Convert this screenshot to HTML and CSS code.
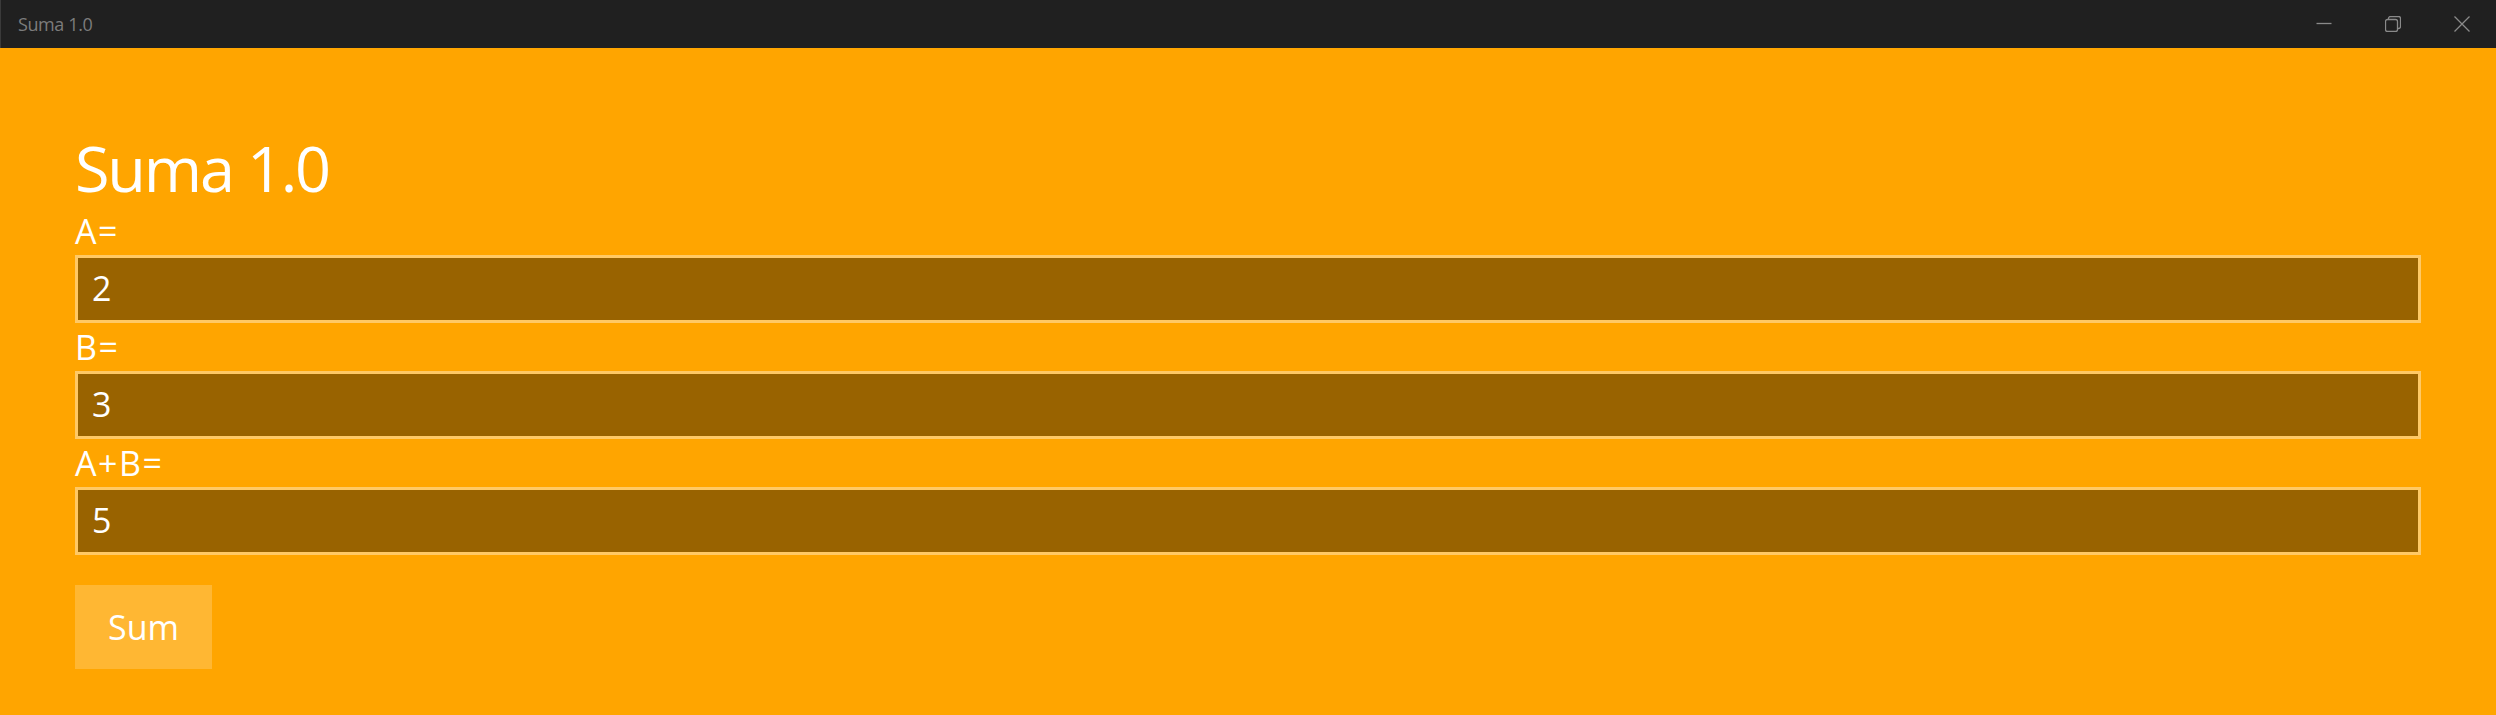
FILE: index.html
```html
<!DOCTYPE html>
<html lang="es">
<head>
<meta charset="utf-8">
<title>Suma 1.0</title>
<link rel="stylesheet" href="styles.css">
</head>
<body>
<div class="window">
  <header class="titlebar">
    <span class="app-title">Suma 1.0</span>
    <div class="controls">
      <div class="ctl">
        <svg width="16" height="16" viewBox="0 0 16 16"><path d="M0.5 7.5H15.5" /></svg>
      </div>
      <div class="ctl">
        <svg width="16" height="16" viewBox="0 0 16 16">
          <rect x="0.5" y="3.5" width="12" height="12" rx="2" />
          <path d="M3.5 3.5V2.5A2 2 0 0 1 5.5 0.5H13.5A2 2 0 0 1 15.5 2.5V10.5A2 2 0 0 1 13.5 12.5H12.5" />
        </svg>
      </div>
      <div class="ctl">
        <svg width="16" height="16" viewBox="0 0 16 16"><path d="M0.5 0.5L15.5 15.5M15.5 0.5L0.5 15.5" /></svg>
      </div>
    </div>
  </header>
  <main class="content">
    <h1 class="heading">Suma 1.0</h1>
    <div class="field">
      <label class="label" for="a">A=</label>
      <input class="box" id="a" type="text" value="2">
    </div>
    <div class="field">
      <label class="label" for="b">B=</label>
      <input class="box" id="b" type="text" value="3">
    </div>
    <div class="field">
      <label class="label" for="r">A+B=</label>
      <input class="box" id="r" type="text" value="5">
    </div>
    <button class="sum-btn" type="button">Sum</button>
  </main>
</div>
</body>
</html>
```

FILE: styles.css
```css
html, body {
  margin: 0;
  padding: 0;
}

body {
  width: 2496px;
  height: 715px;
  overflow: hidden;
  background: #ffa500;
  font-family: "Open Sans", "Noto Sans", sans-serif;
}

.window {
  display: flex;
  flex-direction: column;
  height: 715px;
}

.titlebar {
  height: 48px;
  flex: 0 0 48px;
  background: #202020;
  border-left: 1px solid #3a3a3a;
  box-sizing: border-box;
  display: flex;
  align-items: center;
  justify-content: space-between;
}

.app-title {
  padding-left: 17px;
  font-size: 18px;
  line-height: 48px;
  letter-spacing: -0.4px;
  color: #7c7c7c;
}

.controls {
  display: flex;
  height: 48px;
}

.ctl {
  width: 69px;
  height: 48px;
  display: flex;
  align-items: center;
  justify-content: center;
}

.ctl svg {
  display: block;
  fill: none;
  stroke: #8a8a8a;
  stroke-width: 1.3;
}

.content {
  padding: 82px 75px 0 75px;
  display: flex;
  flex-direction: column;
  align-items: stretch;
}

.heading {
  margin: 0 0 1px 0;
  font-weight: 400;
  font-size: 63px;
  line-height: 76px;
  letter-spacing: -2.2px;
  color: #ffffff;
}

.field {
  display: flex;
  flex-direction: column;
}

.label {
  font-size: 34px;
  line-height: 48px;
  height: 48px;
  letter-spacing: 1.5px;
  color: #ffffff;
}

.box {
  box-sizing: border-box;
  height: 68px;
  width: 100%;
  margin: 0;
  border: 3px solid #ffc966;
  background: #996300;
  padding: 0 0 3px 14px;
  font-family: inherit;
  font-size: 34px;
  color: #ffffff;
  outline: none;
  border-radius: 0;
}

.sum-btn {
  align-self: flex-start;
  margin-top: 30px;
  width: 137px;
  height: 84px;
  border: none;
  border-radius: 0;
  background: #ffb733;
  color: #ffffff;
  font-family: inherit;
  font-size: 34px;
  padding: 0;
}
```
